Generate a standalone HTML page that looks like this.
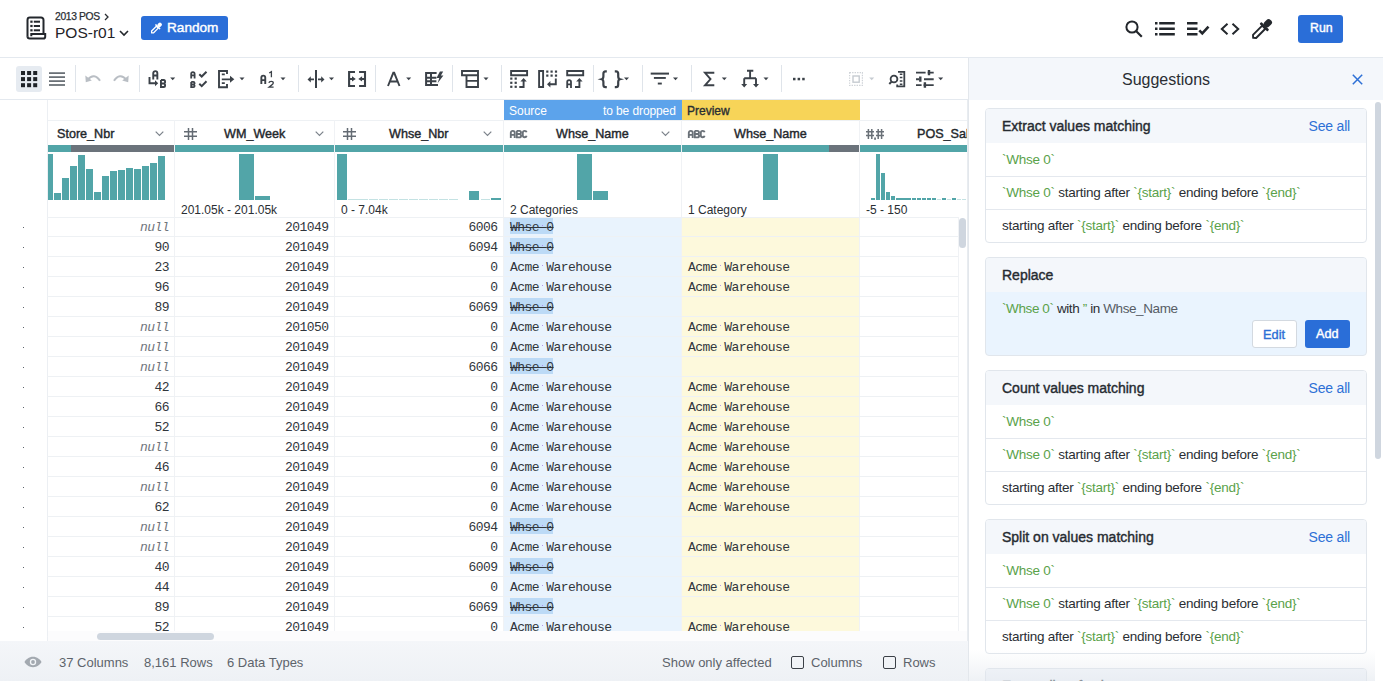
<!DOCTYPE html>
<html><head><meta charset="utf-8">
<style>
*{box-sizing:border-box;margin:0;padding:0}
html,body{width:1383px;height:681px;overflow:hidden;background:#fff;font-family:"Liberation Sans",sans-serif;color:#1f2328}
.abs{position:absolute;white-space:nowrap}
.ic{position:absolute;overflow:visible}
.sep{position:absolute;width:1px;background:#dce2e9}
.mono{font-family:"Liberation Mono",monospace}
.med{-webkit-text-stroke-width:0.4px;font-weight:normal}
.cell{position:absolute;height:20px;font-family:"Liberation Mono",monospace;font-size:13px;letter-spacing:-0.55px;line-height:20px;color:#30353b;white-space:nowrap}
.r{text-align:right}
.nul{color:#6f757c;font-style:italic}
.hl{background:#bcdaf6;text-decoration:line-through;padding:0 1px;margin-left:-1px}
.dot{position:relative}
.dot:after{content:"";position:absolute;left:2.6px;top:4.8px;width:1.7px;height:1.7px;border-radius:50%;background:#a77ae6}
.sug{position:absolute;left:17px;width:382px;border:1px solid #e1e6ec;border-radius:4px;background:#fff;overflow:hidden}
.sh{height:34px;background:#f4f7fb;position:relative;font-size:14px;color:#262b31}
.sh span{-webkit-text-stroke-width:0.4px}
.sh span{position:absolute;left:16px;top:8.5px}
.si.f{border-top:none}
.si.f span.t{top:8.6px}
.sh b{position:absolute;right:16px;top:8.5px;font-weight:normal;color:#2d70d6;font-size:14px;letter-spacing:-0.2px}
.si{height:33px;border-top:1px solid #e4e8ee;position:relative;font-size:13.5px;color:#2a2e33;letter-spacing:-0.25px}
.si span.t{position:absolute;left:16px;top:7.8px;white-space:nowrap}
.g{color:#5aa24a}
</style></head><body>

<div class="abs" style="left:0;top:0;width:1383px;height:58px;border-bottom:1px solid #e4e9ef;background:#fff"></div>
<svg class="ic" style="left:0;top:0" width="60" height="50" viewBox="0 0 60 50"><g fill="none" stroke="#23272c" stroke-width="2"><path d="M27.5 36.5V20a2.4 2.4 0 0 1 2.4-2.4h11.2a2.4 2.4 0 0 1 2.4 2.4v13.6"/><path d="M27.5 36.3a2.3 2.3 0 0 0 2.3 2.3h13.6a1.8 1.8 0 0 0 1.8-1.8v-2.7H31.3v2.2"/></g><g fill="#23272c"><rect x="30.3" y="20.6" width="2.3" height="2.2"/><rect x="33.8" y="20.7" width="6.2" height="2"/><rect x="30.3" y="24.9" width="2.3" height="2.2"/><rect x="33.8" y="25" width="6.2" height="2"/><rect x="30.3" y="29.2" width="2.3" height="2.2"/><rect x="33.8" y="29.3" width="6.2" height="2"/></g></svg>
<div class="abs" style="left:55px;top:11px;font-size:10.3px;color:#2a2e33;letter-spacing:-0.35px;-webkit-text-stroke-width:0.25px">2013 POS</div>
<svg class="ic" style="left:104px;top:13px" width="5" height="8" viewBox="0 0 5 8" ><path d="M1 1l3 3-3 3" fill="none" stroke="#2a2e33" stroke-width="1.3"/></svg>
<div class="abs" style="left:55px;top:24px;font-size:15.5px;color:#1f2328;letter-spacing:0px">POS-r01</div>
<svg class="ic" style="left:119px;top:30px" width="10" height="6" viewBox="0 0 10 6" ><path d="M1 1l4 4 4-4" fill="none" stroke="#23272c" stroke-width="1.6"/></svg>
<div class="abs" style="left:141px;top:16px;width:87px;height:24px;background:#2a6ed8;border-radius:3px"></div>
<svg class="ic" style="left:140px;top:16px" width="30" height="24" viewBox="140 16 30 24"><g transform="rotate(-45 156.6 27.9)"><path d="M149.6 27.9l1.2-1.3H157.6V29.2H150.8z" fill="none" stroke="#fff" stroke-width="1.3" stroke-linejoin="round"/><rect x="157.4" y="24.6" width="1.6" height="6.6" rx="0.5" fill="#fff"/><rect x="158.6" y="26" width="4.6" height="3.8" rx="1.6" fill="#fff"/></g></svg>
<div class="abs" style="left:167px;top:20px;font-size:13.6px;color:#fff;-webkit-text-stroke-width:0.4px">Random</div>
<svg class="ic" style="left:1125px;top:20px" width="18" height="18" viewBox="0 0 18 18" ><circle cx="7" cy="7" r="5.6" fill="none" stroke="#23272c" stroke-width="2"/><path d="M11 11l5.8 5.8" stroke="#23272c" stroke-width="2.2"/></svg>
<svg class="ic" style="left:1154px;top:22px" width="22" height="14" viewBox="0 0 22 14" ><g fill="#23272c"><rect x="1" y="0" width="2.5" height="2.5"/><rect x="1" y="5.5" width="2.5" height="2.5"/><rect x="1" y="11" width="2.5" height="2.5"/><rect x="5.2" y="0" width="15.6" height="2.5"/><rect x="5.2" y="5.5" width="15.6" height="2.5"/><rect x="5.2" y="11" width="15.6" height="2.5"/></g></svg>
<svg class="ic" style="left:1187px;top:22px" width="23" height="14" viewBox="0 0 23 14" ><g fill="#23272c"><rect x="0" y="0" width="10.5" height="2.5"/><rect x="0" y="5.5" width="10.5" height="2.5"/><rect x="0" y="11" width="10.5" height="2.5"/></g><path d="M12.3 8.3l3 3 6.2-6.6" fill="none" stroke="#23272c" stroke-width="2.6"/></svg>
<svg class="ic" style="left:1220px;top:23px" width="20" height="12" viewBox="0 0 20 12" ><path d="M7.5 0.8L1.8 6l5.7 5.2M12.5 0.8L18.2 6l-5.7 5.2" fill="none" stroke="#23272c" stroke-width="2"/></svg>
<svg class="ic" style="left:1240px;top:8px" width="44" height="44" viewBox="1240 8 44 44"><g transform="rotate(-45 1262 29)"><path d="M1249.5 29l2-2.2H1264.5V31.2H1251.5z" fill="none" stroke="#23272c" stroke-width="1.9" stroke-linejoin="round"/><rect x="1264" y="23.5" width="2.6" height="11" rx="0.8" fill="#23272c"/><rect x="1266" y="25.8" width="8.5" height="6.4" rx="2.8" fill="#23272c"/></g></svg>
<div class="abs" style="left:1298px;top:15px;width:45px;height:28px;background:#2a6ed8;border-radius:3px"></div>
<div class="abs" style="left:1310px;top:21px;font-size:12.3px;color:#fff;-webkit-text-stroke-width:0.4px">Run</div>
<div class="abs" style="left:0;top:58px;width:968px;height:42px;border-bottom:1px solid #e4e9ef;background:#fff"></div>
<div class="abs" style="left:16px;top:66px;width:26px;height:26px;background:#e6ebf1;border-radius:3px"></div>
<svg class="ic" style="left:0;top:58px" width="968" height="42" viewBox="0 58 968 42"><rect x="21.0" y="71.0" width="4" height="4" fill="#1f2328"/><rect x="27.1" y="71.0" width="4" height="4" fill="#1f2328"/><rect x="33.2" y="71.0" width="4" height="4" fill="#1f2328"/><rect x="21.0" y="77.1" width="4" height="4" fill="#1f2328"/><rect x="27.1" y="77.1" width="4" height="4" fill="#1f2328"/><rect x="33.2" y="77.1" width="4" height="4" fill="#1f2328"/><rect x="21.0" y="83.2" width="4" height="4" fill="#1f2328"/><rect x="27.1" y="83.2" width="4" height="4" fill="#1f2328"/><rect x="33.2" y="83.2" width="4" height="4" fill="#1f2328"/><rect x="49" y="72.3" width="16" height="1.6" fill="#5a6168"/><rect x="49" y="76.3" width="16" height="1.6" fill="#5a6168"/><rect x="49" y="80.3" width="16" height="1.6" fill="#5a6168"/><rect x="49" y="84.2" width="16" height="1.6" fill="#5a6168"/><rect x="75" y="65" width="1" height="27" fill="#dfe4ea"/><rect x="139" y="65" width="1" height="27" fill="#dfe4ea"/><rect x="298" y="65" width="1" height="27" fill="#dfe4ea"/><rect x="375" y="65" width="1" height="27" fill="#dfe4ea"/><rect x="452" y="65" width="1" height="27" fill="#dfe4ea"/><rect x="501" y="65" width="1" height="27" fill="#dfe4ea"/><rect x="593" y="65" width="1" height="27" fill="#dfe4ea"/><rect x="642" y="65" width="1" height="27" fill="#dfe4ea"/><rect x="691" y="65" width="1" height="27" fill="#dfe4ea"/><rect x="781" y="65" width="1" height="27" fill="#dfe4ea"/><path d="M88 79.5C91.5 74.8 96.5 75 100 80.8" fill="none" stroke="#b9bec4" stroke-width="2"/><path d="M85.3 75.5L85.8 82.2 91.8 80.6z" fill="#b9bec4"/><path d="M126 79.5C122.5 74.8 117.5 75 114 80.8" fill="none" stroke="#b9bec4" stroke-width="2"/><path d="M128.7 75.5L128.2 82.2 122.2 80.6z" fill="#b9bec4"/><path d="M153.25 79.4V73.2a2.05 2.05 0 0 1 4.1 0V79.4M153.25 75.536H157.35000000000002" fill="none" stroke="#3b4148" stroke-width="1.9"/><path d="M149.5 77v6.2h6" fill="none" stroke="#3b4148" stroke-width="1.9"/><path d="M155 80.2l3.2 3-3.2 3z" fill="#3b4148"/><path d="M160.95 79.95H163.8Q165.05 79.95 165.05 81.75V82.5Q165.05 83.5 163.5 83.5H160.95M163.5 83.5Q165.05 83.5 165.05 84.7V86Q165.05 87.05 163.8 87.05H160.95V79.95" fill="none" stroke="#3b4148" stroke-width="1.9"/><path d="M170.2 77.4h5l-2.5 2.9z" fill="#3b4148"/><path d="M191.20000000000002 78.4V73.80000000000001a1.7000000000000002 1.7000000000000002 0 0 1 3.4000000000000004 0V78.4M191.20000000000002 75.376H194.6" fill="none" stroke="#3b4148" stroke-width="1.8"/><path d="M191.20000000000002 81.9H193.3Q194.6 81.9 194.6 83.25V83.5Q194.6 84.5 193.0 84.5H191.20000000000002M193.0 84.5Q194.6 84.5 194.6 85.7V86Q194.6 87.1 193.3 87.1H191.20000000000002V81.9" fill="none" stroke="#3b4148" stroke-width="1.8"/><path d="M199.3 74.2l2.4 2.3 4.8-4.8M199.3 83.8l2.4 2.3 4.8-4.8" fill="none" stroke="#3b4148" stroke-width="2"/><path d="M227 74V71H219V87.2H227V84" fill="none" stroke="#3b4148" stroke-width="1.9"/><path d="M221.8 74.4h3M221.8 83.2h3M221.8 79.3h9" fill="none" stroke="#3b4148" stroke-width="1.8"/><path d="M230 75.8l4.3 3.5-4.3 3.5z" fill="#3b4148"/><path d="M239.5 77.4h5l-2.5 2.9z" fill="#3b4148"/><path d="M261.34999999999997 84.0V77.60000000000001a1.95 1.95 0 0 1 3.9 0V84.0M261.34999999999997 80.09400000000001H265.25" fill="none" stroke="#3b4148" stroke-width="1.9"/><path d="M269.2 73l2.2-1.3V77.2" fill="none" stroke="#3b4148" stroke-width="1.3"/><path d="M268.9 82.8c.3-1.8 4.4-2 4.4.2 0 1.5-2.2 2.3-4.4 4.2h4.7" fill="none" stroke="#3b4148" stroke-width="1.3"/><path d="M280.5 77.4h5l-2.5 2.9z" fill="#3b4148"/><rect x="315" y="70" width="2" height="18" fill="#3b4148"/><path d="M309.5 79.4h4.5M318 79.4h4.5" stroke="#3b4148" stroke-width="1.9"/><path d="M307.5 79.4l3.3-3.2v6.4zM324.5 79.4l-3.3-3.2v6.4z" fill="#3b4148"/><path d="M329 77.4h5l-2.5 2.9z" fill="#3b4148"/><path d="M355 72H349.1V86H355M359.1 72H365V86H359.1" fill="none" stroke="#3b4148" stroke-width="2.1"/><path d="M349.5 78.9h3M364.6 78.9h-3" stroke="#3b4148" stroke-width="2"/><path d="M355.8 78.9l-3.8-2.7v5.4zM358.3 78.9l3.8-2.7v5.4z" fill="#3b4148"/><path d="M388 86L393.3 72.8h.9L399.5 86M390.2 81.5h7" fill="none" stroke="#3b4148" stroke-width="1.9"/><path d="M406.2 77.4h5l-2.5 2.9z" fill="#3b4148"/><path d="M436.6 73H426.1V84.9H438M431 73V84.9M426.1 77.8H436.4M426.1 81.3H436.4" fill="none" stroke="#3b4148" stroke-width="2"/><path d="M439.9 71.4L436.5 78H439.3L437.6 83.2 443.4 75.5H440.9L443.2 71.4z" fill="#3b4148"/><path d="M462 71h16v4.3h-16z" fill="none" stroke="#3b4148" stroke-width="1.9"/><path d="M466.5 75.3V87h11.5V75.3M466.5 80.9h11.5" fill="none" stroke="#3b4148" stroke-width="1.9"/><path d="M483.5 77.4h5l-2.5 2.9z" fill="#3b4148"/><path d="M511.1 71h16v4.2h-16z" fill="none" stroke="#3b4148" stroke-width="1.9"/><rect x="510.2" y="77.5" width="2.2" height="2.2" fill="#3b4148"/><rect x="514.6" y="77.5" width="2.2" height="2.2" fill="#3b4148"/><rect x="510.2" y="81.7" width="2.2" height="2.2" fill="#3b4148"/><rect x="514.6" y="81.7" width="2.2" height="2.2" fill="#3b4148"/><rect x="510.2" y="85.7" width="2.2" height="2.2" fill="#3b4148"/><rect x="514.6" y="85.7" width="2.2" height="2.2" fill="#3b4148"/><path d="M519.3 87H523.6V80.5" fill="none" stroke="#3b4148" stroke-width="1.9"/><path d="M523.6 78l-3.2 3.4h6.4z" fill="#3b4148"/><path d="M539.1 71h4v16h-4z" fill="none" stroke="#3b4148" stroke-width="1.9"/><rect x="546.2" y="70.5" width="2.2" height="2.2" fill="#3b4148"/><rect x="546.2" y="74.5" width="2.2" height="2.2" fill="#3b4148"/><rect x="550.5" y="70.5" width="2.2" height="2.2" fill="#3b4148"/><rect x="550.5" y="74.5" width="2.2" height="2.2" fill="#3b4148"/><rect x="554.9" y="70.5" width="2.2" height="2.2" fill="#3b4148"/><rect x="554.9" y="74.5" width="2.2" height="2.2" fill="#3b4148"/><path d="M555.8 78.5V84.2H549.5" fill="none" stroke="#3b4148" stroke-width="1.9"/><path d="M547 84.2l3.4-3.2v6.4z" fill="#3b4148"/><path d="M567.2 71h16v4.2h-16z" fill="none" stroke="#3b4148" stroke-width="1.9"/><path d="M567.1999999999999 88.0V82.00000000000001a1.9 1.9 0 0 1 3.8 0V88.0M567.1999999999999 84.304H571.0" fill="none" stroke="#3b4148" stroke-width="1.8"/><path d="M575 87H579.4V80.5" fill="none" stroke="#3b4148" stroke-width="1.9"/><path d="M579.4 78l-3.2 3.4h6.4z" fill="#3b4148"/><path d="M606.8 71.3h-1.2c-1.7 0-2.2.8-2.2 2.4v2.6c0 1.6-.6 2.6-1.7 2.9 1.1.3 1.7 1.3 1.7 2.9v2.6c0 1.6.5 2.4 2.2 2.4h1.2M614.8 71.3h1.2c1.7 0 2.2.8 2.2 2.4v2.6c0 1.6.6 2.6 1.7 2.9-1.1.3-1.7 1.3-1.7 2.9v2.6c0 1.6-.5 2.4-2.2 2.4h-1.2" fill="none" stroke="#3b4148" stroke-width="2.2"/><path d="M624 77.4h5l-2.5 2.9z" fill="#3b4148"/><rect x="650.7" y="72.6" width="18.3" height="2" fill="#3b4148"/><rect x="653.9" y="77" width="11.9" height="1.9" fill="#3b4148"/><rect x="657.8" y="82.6" width="4" height="1.9" fill="#3b4148"/><path d="M673 77.4h5l-2.5 2.9z" fill="#3b4148"/><path d="M714.3 72.8H705L710.5 79 705 85.3H714.3" fill="none" stroke="#3b4148" stroke-width="1.9"/><path d="M721.8 77.4h5l-2.5 2.9z" fill="#3b4148"/><path d="M747 70.8h6.3M750.1 70.8V78.3M744.2 78.3H756M744.2 78.3V84.5M756 78.3V84.5" fill="none" stroke="#3b4148" stroke-width="1.9"/><path d="M741.2 84l3 3.5 3-3.5zM753 84l3 3.5 3-3.5z" fill="#3b4148"/><path d="M763.5 77.4h5l-2.5 2.9z" fill="#3b4148"/><rect x="793" y="77.8" width="2.5" height="2.5" fill="#3b4148"/><rect x="797.6" y="77.8" width="2.5" height="2.5" fill="#3b4148"/><rect x="802.2" y="77.8" width="2.5" height="2.5" fill="#3b4148"/><rect x="849.6" y="72.6" width="12.8" height="12.8" fill="none" stroke="#cfd3d8" stroke-width="1.2" stroke-dasharray="1.4 1.1"/><rect x="853" y="76" width="6.2" height="6.2" fill="none" stroke="#c6cbd1" stroke-width="1.4"/><path d="M869.2 77.4h5l-2.5 2.9z" fill="#c6cbd1"/><path d="M898 71.8H904.3V86.3H897.2V84.5" fill="none" stroke="#3b4148" stroke-width="1.8"/><path d="M899.8 74.2h2.6M899.8 77.6h2.6M899.8 81h2.6M899.8 84.3h2.6" stroke="#3b4148" stroke-width="1.5"/><circle cx="894" cy="79" r="3.4" fill="none" stroke="#3b4148" stroke-width="1.8"/><path d="M891.6 81.6L889.3 84" stroke="#3b4148" stroke-width="2"/><path d="M916 72.6h9.6M927.7 72.6h6M916 79.2h3M924 79.2h9.7M916 85.1h5.6M923.6 85.1h10.1" stroke="#3b4148" stroke-width="1.9"/><path d="M929 70v5.2M920.3 76.6v5.2M924.9 82.2v5.5" stroke="#3b4148" stroke-width="2.4"/><path d="M938.2 77.4h5l-2.5 2.9z" fill="#3b4148"/></svg><div class="abs" style="left:0;top:100px;width:968px;height:541px;background:#fff"></div>
<div class="abs" style="left:504px;top:217px;width:177px;height:414px;background:#e9f3fd"></div>
<div class="abs" style="left:682px;top:217px;width:177px;height:414px;background:#fdf9dc"></div>
<div class="abs" style="left:504px;top:100px;width:178px;height:20px;background:#5ca3eb"></div>
<div class="abs" style="left:682px;top:100px;width:178px;height:20px;background:#f7d458"></div>
<div class="abs" style="left:509px;top:104px;font-size:12px;color:#fff">Source</div>
<div class="abs" style="left:603px;top:104px;font-size:12px;color:#fff;letter-spacing:-0.1px">to be dropped</div>
<div class="abs" style="left:687px;top:104px;font-size:12px;color:#2a2e33;-webkit-text-stroke-width:0.35px">Preview</div>
<div class="abs" style="left:47px;top:120px;width:921px;height:1px;background:#eef1f4"></div>
<div class="abs" style="left:47px;top:100px;width:1px;height:541px;background:#eceff3"></div>
<div class="abs" style="left:174px;top:120px;width:1px;height:511px;background:#f0f2f5"></div>
<div class="abs" style="left:334px;top:120px;width:1px;height:511px;background:#f0f2f5"></div>
<div class="abs" style="left:503px;top:120px;width:1px;height:511px;background:#f0f2f5"></div>
<div class="abs" style="left:681px;top:120px;width:1px;height:511px;background:#f0f2f5"></div>
<div class="abs" style="left:859px;top:120px;width:1px;height:511px;background:#f0f2f5"></div>
<div class="abs" style="left:48px;top:145px;width:126px;height:7px;background:#52a5a8"></div>
<div class="abs" style="left:71px;top:145px;width:103px;height:7px;background:#6b737b"></div>
<div class="abs" style="left:175px;top:145px;width:159px;height:7px;background:#52a5a8"></div>
<div class="abs" style="left:335px;top:145px;width:168px;height:7px;background:#52a5a8"></div>
<div class="abs" style="left:504px;top:145px;width:177px;height:7px;background:#52a5a8"></div>
<div class="abs" style="left:682px;top:145px;width:147px;height:7px;background:#52a5a8"></div>
<div class="abs" style="left:829px;top:145px;width:30px;height:7px;background:#6b737b"></div>
<div class="abs" style="left:860px;top:145px;width:107px;height:7px;background:#52a5a8"></div>
<div class="abs" style="left:48px;top:154px;width:5px;height:46px;background:#52a5a8"></div>
<div class="abs" style="left:54px;top:193px;width:7px;height:7px;background:#52a5a8"></div>
<div class="abs" style="left:62px;top:178px;width:7px;height:22px;background:#52a5a8"></div>
<div class="abs" style="left:70px;top:166px;width:7px;height:34px;background:#52a5a8"></div>
<div class="abs" style="left:78px;top:155px;width:7px;height:45px;background:#52a5a8"></div>
<div class="abs" style="left:86px;top:169px;width:7px;height:31px;background:#52a5a8"></div>
<div class="abs" style="left:94px;top:192px;width:7px;height:8px;background:#52a5a8"></div>
<div class="abs" style="left:102px;top:176px;width:7px;height:24px;background:#52a5a8"></div>
<div class="abs" style="left:110px;top:171px;width:7px;height:29px;background:#52a5a8"></div>
<div class="abs" style="left:118px;top:170px;width:7px;height:30px;background:#52a5a8"></div>
<div class="abs" style="left:126px;top:168px;width:7px;height:32px;background:#52a5a8"></div>
<div class="abs" style="left:134px;top:169px;width:7px;height:31px;background:#52a5a8"></div>
<div class="abs" style="left:142px;top:166px;width:7px;height:34px;background:#52a5a8"></div>
<div class="abs" style="left:150px;top:163px;width:7px;height:37px;background:#52a5a8"></div>
<div class="abs" style="left:158px;top:156px;width:7px;height:44px;background:#52a5a8"></div>
<div class="abs" style="left:239px;top:154px;width:15px;height:46px;background:#52a5a8"></div>
<div class="abs" style="left:255px;top:196px;width:15px;height:4px;background:#52a5a8"></div>
<div class="abs" style="left:337px;top:154px;width:10px;height:46px;background:#52a5a8"></div>
<div class="abs" style="left:469px;top:191px;width:10px;height:9px;background:#52a5a8"></div>
<div class="abs" style="left:491px;top:198px;width:10px;height:2px;background:#52a5a8"></div>
<div class="abs" style="left:348.4px;top:199px;width:9.2px;height:1px;background:#c4e2e3"></div>
<div class="abs" style="left:358.4px;top:199px;width:9.2px;height:1px;background:#c4e2e3"></div>
<div class="abs" style="left:368.5px;top:199px;width:9.2px;height:1px;background:#c4e2e3"></div>
<div class="abs" style="left:378.5px;top:199px;width:9.2px;height:1px;background:#c4e2e3"></div>
<div class="abs" style="left:388.6px;top:199px;width:9.2px;height:1px;background:#c4e2e3"></div>
<div class="abs" style="left:398.6px;top:199px;width:9.2px;height:1px;background:#c4e2e3"></div>
<div class="abs" style="left:408.7px;top:199px;width:9.2px;height:1px;background:#c4e2e3"></div>
<div class="abs" style="left:418.8px;top:199px;width:9.2px;height:1px;background:#c4e2e3"></div>
<div class="abs" style="left:428.8px;top:199px;width:9.2px;height:1px;background:#c4e2e3"></div>
<div class="abs" style="left:438.8px;top:199px;width:9.2px;height:1px;background:#c4e2e3"></div>
<div class="abs" style="left:448.9px;top:199px;width:9.2px;height:1px;background:#c4e2e3"></div>
<div class="abs" style="left:480.5px;top:199px;width:9.2px;height:1px;background:#c4e2e3"></div>
<div class="abs" style="left:577px;top:154px;width:15px;height:46px;background:#52a5a8"></div>
<div class="abs" style="left:593px;top:191px;width:15px;height:9px;background:#52a5a8"></div>
<div class="abs" style="left:763px;top:154px;width:15px;height:46px;background:#52a5a8"></div>
<div class="abs" style="left:871.00px;top:198px;width:4.2px;height:2px;background:#52a5a8"></div>
<div class="abs" style="left:876.07px;top:154px;width:4.2px;height:46px;background:#52a5a8"></div>
<div class="abs" style="left:881.14px;top:173px;width:4.2px;height:27px;background:#52a5a8"></div>
<div class="abs" style="left:886.21px;top:192px;width:4.2px;height:8px;background:#52a5a8"></div>
<div class="abs" style="left:891.28px;top:196px;width:4.2px;height:4px;background:#52a5a8"></div>
<div class="abs" style="left:896.35px;top:198px;width:4.2px;height:2px;background:#52a5a8"></div>
<div class="abs" style="left:901.42px;top:198px;width:4.2px;height:2px;background:#52a5a8"></div>
<div class="abs" style="left:906.49px;top:198px;width:4.2px;height:2px;background:#52a5a8"></div>
<div class="abs" style="left:911.56px;top:198px;width:4.2px;height:2px;background:#52a5a8"></div>
<div class="abs" style="left:916.63px;top:198px;width:4.2px;height:2px;background:#52a5a8"></div>
<div class="abs" style="left:921.70px;top:198px;width:4.2px;height:2px;background:#52a5a8"></div>
<div class="abs" style="left:926.77px;top:198px;width:4.2px;height:2px;background:#52a5a8"></div>
<div class="abs" style="left:931.84px;top:198px;width:4.2px;height:2px;background:#52a5a8"></div>
<div class="abs" style="left:936.91px;top:199px;width:4.2px;height:1px;background:#c4e2e3"></div>
<div class="abs" style="left:941.98px;top:198px;width:4.2px;height:2px;background:#52a5a8"></div>
<div class="abs" style="left:947.05px;top:199px;width:4.2px;height:1px;background:#c4e2e3"></div>
<div class="abs" style="left:952.12px;top:198px;width:4.2px;height:2px;background:#52a5a8"></div>
<div class="abs" style="left:957.19px;top:199px;width:4.2px;height:1px;background:#c4e2e3"></div>
<div class="abs" style="left:962.26px;top:199px;width:4.2px;height:1px;background:#c4e2e3"></div>
<div class="abs" style="left:57px;top:127px;font-size:12.6px;color:#23272c;-webkit-text-stroke-width:0.4px">Store_Nbr</div>
<svg class="ic" style="left:155px;top:131px" width="9" height="6" viewBox="0 0 9 6" ><path d="M0.7 0.7l3.8 3.8 3.8-3.8" fill="none" stroke="#7b828a" stroke-width="1.2"/></svg>
<svg class="ic" style="left:184px;top:128px" width="13" height="12" viewBox="0 0 13 12" ><g stroke="#646b73" stroke-width="1.5" fill="none"><path d="M4.5 0v12M8.5 0v12M0 3.8h13M0 8.2h13"/></g></svg>
<div class="abs" style="left:224px;top:127px;font-size:12.6px;color:#23272c;-webkit-text-stroke-width:0.4px">WM_Week</div>
<svg class="ic" style="left:315px;top:131px" width="9" height="6" viewBox="0 0 9 6" ><path d="M0.7 0.7l3.8 3.8 3.8-3.8" fill="none" stroke="#7b828a" stroke-width="1.2"/></svg>
<svg class="ic" style="left:343px;top:128px" width="13" height="12" viewBox="0 0 13 12" ><g stroke="#646b73" stroke-width="1.5" fill="none"><path d="M4.5 0v12M8.5 0v12M0 3.8h13M0 8.2h13"/></g></svg>
<div class="abs" style="left:389px;top:127px;font-size:12.6px;color:#23272c;-webkit-text-stroke-width:0.4px">Whse_Nbr</div>
<svg class="ic" style="left:483px;top:131px" width="9" height="6" viewBox="0 0 9 6" ><path d="M0.7 0.7l3.8 3.8 3.8-3.8" fill="none" stroke="#7b828a" stroke-width="1.2"/></svg>
<svg class="ic" style="left:510px;top:130px" width="18" height="9" viewBox="0 0 18 9"><g fill="none" stroke="#6a7178" stroke-width="1.85"><path d="M0.8 8V2.8a1.95 1.95 0 0 1 3.9 0V8M0.8 4.8h3.9" /><path d="M6.8 0.8h2.6a1.6 1.6 0 0 1 0 3.2H6.8M9.4 4a1.7 1.7 0 0 1 0 3.4H6.8V0.8" /><path d="M16.6 2.3c-.2-1-1-1.5-1.9-1.5-1.2 0-1.9.7-1.9 2V5.2c0 1.3.7 2 1.9 2 .9 0 1.7-.5 1.9-1.5"/></g></svg>
<div class="abs" style="left:556px;top:127px;font-size:12.6px;color:#23272c;-webkit-text-stroke-width:0.4px">Whse_Name</div>
<svg class="ic" style="left:661px;top:131px" width="9" height="6" viewBox="0 0 9 6" ><path d="M0.7 0.7l3.8 3.8 3.8-3.8" fill="none" stroke="#7b828a" stroke-width="1.2"/></svg>
<svg class="ic" style="left:688px;top:130px" width="18" height="9" viewBox="0 0 18 9"><g fill="none" stroke="#6a7178" stroke-width="1.85"><path d="M0.8 8V2.8a1.95 1.95 0 0 1 3.9 0V8M0.8 4.8h3.9" /><path d="M6.8 0.8h2.6a1.6 1.6 0 0 1 0 3.2H6.8M9.4 4a1.7 1.7 0 0 1 0 3.4H6.8V0.8" /><path d="M16.6 2.3c-.2-1-1-1.5-1.9-1.5-1.2 0-1.9.7-1.9 2V5.2c0 1.3.7 2 1.9 2 .9 0 1.7-.5 1.9-1.5"/></g></svg>
<div class="abs" style="left:734px;top:127px;font-size:12.6px;color:#23272c;-webkit-text-stroke-width:0.4px">Whse_Name</div>
<svg class="ic" style="left:866px;top:129px" width="18" height="11" viewBox="0 0 18 11" ><g stroke="#6a7178" stroke-width="1.5" fill="none"><path d="M2.4 0v10M5.8 0v10M0 2.8h8M0 6.5h8M12.2 0v10M15.6 0v10M10 2.8h8M10 6.5h8"/></g><rect x="8.2" y="8.5" width="1.7" height="2.3" fill="#6a7178"/></svg>
<div class="abs" style="left:917px;top:127px;width:50px;overflow:hidden;font-size:12.6px;color:#23272c;-webkit-text-stroke-width:0.4px">POS_Sales</div>
<div class="abs" style="left:181px;top:203px;font-size:12px;color:#2a2e33">201.05k - 201.05k</div>
<div class="abs" style="left:341px;top:203px;font-size:12px;color:#2a2e33">0 - 7.04k</div>
<div class="abs" style="left:510px;top:203px;font-size:12px;color:#2a2e33">2 Categories</div>
<div class="abs" style="left:688px;top:203px;font-size:12px;color:#2a2e33">1 Category</div>
<div class="abs" style="left:866px;top:203px;font-size:12px;color:#2a2e33">-5 - 150</div>
<div class="abs" style="left:47px;top:217px;width:911px;height:1px;background:#eef1f4"></div>
<div class="abs" style="left:47px;top:236px;width:911px;height:1px;background:#eef1f4"></div>
<div class="abs" style="left:22.5px;top:226.5px;width:1.5px;height:1.5px;background:#5f656c"></div>
<div class="cell r nul" style="left:48px;top:218px;width:121px">null</div>
<div class="cell r" style="left:175px;top:218px;width:153.5px">201049</div>
<div class="cell r" style="left:335px;top:218px;width:162.5px">6006</div>
<div class="abs" style="left:510px;top:218px;width:43px;height:16px;background:#bcdaf6"></div>
<div class="cell" style="left:510px;top:218px"><span style="text-decoration:line-through">Whse<span class="dot">&nbsp;</span>0</span></div>
<div class="abs" style="left:47px;top:256px;width:911px;height:1px;background:#eef1f4"></div>
<div class="abs" style="left:22.5px;top:246.5px;width:1.5px;height:1.5px;background:#5f656c"></div>
<div class="cell r" style="left:48px;top:238px;width:121px">90</div>
<div class="cell r" style="left:175px;top:238px;width:153.5px">201049</div>
<div class="cell r" style="left:335px;top:238px;width:162.5px">6094</div>
<div class="abs" style="left:510px;top:238px;width:43px;height:16px;background:#bcdaf6"></div>
<div class="cell" style="left:510px;top:238px"><span style="text-decoration:line-through">Whse<span class="dot">&nbsp;</span>0</span></div>
<div class="abs" style="left:47px;top:276px;width:911px;height:1px;background:#eef1f4"></div>
<div class="abs" style="left:22.5px;top:266.5px;width:1.5px;height:1.5px;background:#5f656c"></div>
<div class="cell r" style="left:48px;top:258px;width:121px">23</div>
<div class="cell r" style="left:175px;top:258px;width:153.5px">201049</div>
<div class="cell r" style="left:335px;top:258px;width:162.5px">0</div>
<div class="cell" style="left:510px;top:258px">Acme<span class="dot">&nbsp;</span>Warehouse</div>
<div class="cell" style="left:688px;top:258px">Acme<span class="dot">&nbsp;</span>Warehouse</div>
<div class="abs" style="left:47px;top:296px;width:911px;height:1px;background:#eef1f4"></div>
<div class="abs" style="left:22.5px;top:286.5px;width:1.5px;height:1.5px;background:#5f656c"></div>
<div class="cell r" style="left:48px;top:278px;width:121px">96</div>
<div class="cell r" style="left:175px;top:278px;width:153.5px">201049</div>
<div class="cell r" style="left:335px;top:278px;width:162.5px">0</div>
<div class="cell" style="left:510px;top:278px">Acme<span class="dot">&nbsp;</span>Warehouse</div>
<div class="cell" style="left:688px;top:278px">Acme<span class="dot">&nbsp;</span>Warehouse</div>
<div class="abs" style="left:47px;top:316px;width:911px;height:1px;background:#eef1f4"></div>
<div class="abs" style="left:22.5px;top:306.5px;width:1.5px;height:1.5px;background:#5f656c"></div>
<div class="cell r" style="left:48px;top:298px;width:121px">89</div>
<div class="cell r" style="left:175px;top:298px;width:153.5px">201049</div>
<div class="cell r" style="left:335px;top:298px;width:162.5px">6069</div>
<div class="abs" style="left:510px;top:298px;width:43px;height:16px;background:#bcdaf6"></div>
<div class="cell" style="left:510px;top:298px"><span style="text-decoration:line-through">Whse<span class="dot">&nbsp;</span>0</span></div>
<div class="abs" style="left:47px;top:336px;width:911px;height:1px;background:#eef1f4"></div>
<div class="abs" style="left:22.5px;top:326.5px;width:1.5px;height:1.5px;background:#5f656c"></div>
<div class="cell r nul" style="left:48px;top:318px;width:121px">null</div>
<div class="cell r" style="left:175px;top:318px;width:153.5px">201050</div>
<div class="cell r" style="left:335px;top:318px;width:162.5px">0</div>
<div class="cell" style="left:510px;top:318px">Acme<span class="dot">&nbsp;</span>Warehouse</div>
<div class="cell" style="left:688px;top:318px">Acme<span class="dot">&nbsp;</span>Warehouse</div>
<div class="abs" style="left:47px;top:356px;width:911px;height:1px;background:#eef1f4"></div>
<div class="abs" style="left:22.5px;top:346.5px;width:1.5px;height:1.5px;background:#5f656c"></div>
<div class="cell r nul" style="left:48px;top:338px;width:121px">null</div>
<div class="cell r" style="left:175px;top:338px;width:153.5px">201049</div>
<div class="cell r" style="left:335px;top:338px;width:162.5px">0</div>
<div class="cell" style="left:510px;top:338px">Acme<span class="dot">&nbsp;</span>Warehouse</div>
<div class="cell" style="left:688px;top:338px">Acme<span class="dot">&nbsp;</span>Warehouse</div>
<div class="abs" style="left:47px;top:376px;width:911px;height:1px;background:#eef1f4"></div>
<div class="abs" style="left:22.5px;top:366.5px;width:1.5px;height:1.5px;background:#5f656c"></div>
<div class="cell r nul" style="left:48px;top:358px;width:121px">null</div>
<div class="cell r" style="left:175px;top:358px;width:153.5px">201049</div>
<div class="cell r" style="left:335px;top:358px;width:162.5px">6066</div>
<div class="abs" style="left:510px;top:358px;width:43px;height:16px;background:#bcdaf6"></div>
<div class="cell" style="left:510px;top:358px"><span style="text-decoration:line-through">Whse<span class="dot">&nbsp;</span>0</span></div>
<div class="abs" style="left:47px;top:396px;width:911px;height:1px;background:#eef1f4"></div>
<div class="abs" style="left:22.5px;top:386.5px;width:1.5px;height:1.5px;background:#5f656c"></div>
<div class="cell r" style="left:48px;top:378px;width:121px">42</div>
<div class="cell r" style="left:175px;top:378px;width:153.5px">201049</div>
<div class="cell r" style="left:335px;top:378px;width:162.5px">0</div>
<div class="cell" style="left:510px;top:378px">Acme<span class="dot">&nbsp;</span>Warehouse</div>
<div class="cell" style="left:688px;top:378px">Acme<span class="dot">&nbsp;</span>Warehouse</div>
<div class="abs" style="left:47px;top:416px;width:911px;height:1px;background:#eef1f4"></div>
<div class="abs" style="left:22.5px;top:406.5px;width:1.5px;height:1.5px;background:#5f656c"></div>
<div class="cell r" style="left:48px;top:398px;width:121px">66</div>
<div class="cell r" style="left:175px;top:398px;width:153.5px">201049</div>
<div class="cell r" style="left:335px;top:398px;width:162.5px">0</div>
<div class="cell" style="left:510px;top:398px">Acme<span class="dot">&nbsp;</span>Warehouse</div>
<div class="cell" style="left:688px;top:398px">Acme<span class="dot">&nbsp;</span>Warehouse</div>
<div class="abs" style="left:47px;top:436px;width:911px;height:1px;background:#eef1f4"></div>
<div class="abs" style="left:22.5px;top:426.5px;width:1.5px;height:1.5px;background:#5f656c"></div>
<div class="cell r" style="left:48px;top:418px;width:121px">52</div>
<div class="cell r" style="left:175px;top:418px;width:153.5px">201049</div>
<div class="cell r" style="left:335px;top:418px;width:162.5px">0</div>
<div class="cell" style="left:510px;top:418px">Acme<span class="dot">&nbsp;</span>Warehouse</div>
<div class="cell" style="left:688px;top:418px">Acme<span class="dot">&nbsp;</span>Warehouse</div>
<div class="abs" style="left:47px;top:456px;width:911px;height:1px;background:#eef1f4"></div>
<div class="abs" style="left:22.5px;top:446.5px;width:1.5px;height:1.5px;background:#5f656c"></div>
<div class="cell r nul" style="left:48px;top:438px;width:121px">null</div>
<div class="cell r" style="left:175px;top:438px;width:153.5px">201049</div>
<div class="cell r" style="left:335px;top:438px;width:162.5px">0</div>
<div class="cell" style="left:510px;top:438px">Acme<span class="dot">&nbsp;</span>Warehouse</div>
<div class="cell" style="left:688px;top:438px">Acme<span class="dot">&nbsp;</span>Warehouse</div>
<div class="abs" style="left:47px;top:476px;width:911px;height:1px;background:#eef1f4"></div>
<div class="abs" style="left:22.5px;top:466.5px;width:1.5px;height:1.5px;background:#5f656c"></div>
<div class="cell r" style="left:48px;top:458px;width:121px">46</div>
<div class="cell r" style="left:175px;top:458px;width:153.5px">201049</div>
<div class="cell r" style="left:335px;top:458px;width:162.5px">0</div>
<div class="cell" style="left:510px;top:458px">Acme<span class="dot">&nbsp;</span>Warehouse</div>
<div class="cell" style="left:688px;top:458px">Acme<span class="dot">&nbsp;</span>Warehouse</div>
<div class="abs" style="left:47px;top:496px;width:911px;height:1px;background:#eef1f4"></div>
<div class="abs" style="left:22.5px;top:486.5px;width:1.5px;height:1.5px;background:#5f656c"></div>
<div class="cell r nul" style="left:48px;top:478px;width:121px">null</div>
<div class="cell r" style="left:175px;top:478px;width:153.5px">201049</div>
<div class="cell r" style="left:335px;top:478px;width:162.5px">0</div>
<div class="cell" style="left:510px;top:478px">Acme<span class="dot">&nbsp;</span>Warehouse</div>
<div class="cell" style="left:688px;top:478px">Acme<span class="dot">&nbsp;</span>Warehouse</div>
<div class="abs" style="left:47px;top:516px;width:911px;height:1px;background:#eef1f4"></div>
<div class="abs" style="left:22.5px;top:506.5px;width:1.5px;height:1.5px;background:#5f656c"></div>
<div class="cell r" style="left:48px;top:498px;width:121px">62</div>
<div class="cell r" style="left:175px;top:498px;width:153.5px">201049</div>
<div class="cell r" style="left:335px;top:498px;width:162.5px">0</div>
<div class="cell" style="left:510px;top:498px">Acme<span class="dot">&nbsp;</span>Warehouse</div>
<div class="cell" style="left:688px;top:498px">Acme<span class="dot">&nbsp;</span>Warehouse</div>
<div class="abs" style="left:47px;top:536px;width:911px;height:1px;background:#eef1f4"></div>
<div class="abs" style="left:22.5px;top:526.5px;width:1.5px;height:1.5px;background:#5f656c"></div>
<div class="cell r nul" style="left:48px;top:518px;width:121px">null</div>
<div class="cell r" style="left:175px;top:518px;width:153.5px">201049</div>
<div class="cell r" style="left:335px;top:518px;width:162.5px">6094</div>
<div class="abs" style="left:510px;top:518px;width:43px;height:16px;background:#bcdaf6"></div>
<div class="cell" style="left:510px;top:518px"><span style="text-decoration:line-through">Whse<span class="dot">&nbsp;</span>0</span></div>
<div class="abs" style="left:47px;top:556px;width:911px;height:1px;background:#eef1f4"></div>
<div class="abs" style="left:22.5px;top:546.5px;width:1.5px;height:1.5px;background:#5f656c"></div>
<div class="cell r nul" style="left:48px;top:538px;width:121px">null</div>
<div class="cell r" style="left:175px;top:538px;width:153.5px">201049</div>
<div class="cell r" style="left:335px;top:538px;width:162.5px">0</div>
<div class="cell" style="left:510px;top:538px">Acme<span class="dot">&nbsp;</span>Warehouse</div>
<div class="cell" style="left:688px;top:538px">Acme<span class="dot">&nbsp;</span>Warehouse</div>
<div class="abs" style="left:47px;top:576px;width:911px;height:1px;background:#eef1f4"></div>
<div class="abs" style="left:22.5px;top:566.5px;width:1.5px;height:1.5px;background:#5f656c"></div>
<div class="cell r" style="left:48px;top:558px;width:121px">40</div>
<div class="cell r" style="left:175px;top:558px;width:153.5px">201049</div>
<div class="cell r" style="left:335px;top:558px;width:162.5px">6009</div>
<div class="abs" style="left:510px;top:558px;width:43px;height:16px;background:#bcdaf6"></div>
<div class="cell" style="left:510px;top:558px"><span style="text-decoration:line-through">Whse<span class="dot">&nbsp;</span>0</span></div>
<div class="abs" style="left:47px;top:596px;width:911px;height:1px;background:#eef1f4"></div>
<div class="abs" style="left:22.5px;top:586.5px;width:1.5px;height:1.5px;background:#5f656c"></div>
<div class="cell r" style="left:48px;top:578px;width:121px">44</div>
<div class="cell r" style="left:175px;top:578px;width:153.5px">201049</div>
<div class="cell r" style="left:335px;top:578px;width:162.5px">0</div>
<div class="cell" style="left:510px;top:578px">Acme<span class="dot">&nbsp;</span>Warehouse</div>
<div class="cell" style="left:688px;top:578px">Acme<span class="dot">&nbsp;</span>Warehouse</div>
<div class="abs" style="left:47px;top:616px;width:911px;height:1px;background:#eef1f4"></div>
<div class="abs" style="left:22.5px;top:606.5px;width:1.5px;height:1.5px;background:#5f656c"></div>
<div class="cell r" style="left:48px;top:598px;width:121px">89</div>
<div class="cell r" style="left:175px;top:598px;width:153.5px">201049</div>
<div class="cell r" style="left:335px;top:598px;width:162.5px">6069</div>
<div class="abs" style="left:510px;top:598px;width:43px;height:16px;background:#bcdaf6"></div>
<div class="cell" style="left:510px;top:598px"><span style="text-decoration:line-through">Whse<span class="dot">&nbsp;</span>0</span></div>
<div class="abs" style="left:47px;top:636px;width:911px;height:1px;background:#eef1f4"></div>
<div class="abs" style="left:22.5px;top:626.5px;width:1.5px;height:1.5px;background:#5f656c"></div>
<div class="cell r" style="left:48px;top:618px;width:121px">52</div>
<div class="cell r" style="left:175px;top:618px;width:153.5px">201049</div>
<div class="cell r" style="left:335px;top:618px;width:162.5px">0</div>
<div class="cell" style="left:510px;top:618px">Acme<span class="dot">&nbsp;</span>Warehouse</div>
<div class="cell" style="left:688px;top:618px">Acme<span class="dot">&nbsp;</span>Warehouse</div>
<div class="abs" style="left:48px;top:631px;width:920px;height:10px;background:#fcfcfd"></div>
<div class="abs" style="left:97px;top:633px;width:117px;height:7px;background:#cfd6df;border-radius:4px"></div>
<div class="abs" style="left:958px;top:217px;width:10px;height:414px;background:#fff;border-left:1px solid #f0f2f5"></div>
<div class="abs" style="left:959px;top:218px;width:7px;height:30px;background:#cfd6df;border-radius:4px"></div>
<div class="abs" style="left:967px;top:100px;width:1px;height:541px;background:#e8ecf0"></div>
<div class="abs" style="left:0;top:641px;width:968px;height:40px;background:linear-gradient(#f4f6f9,#eef1f5)"></div>
<svg class="ic" style="left:24px;top:656px" width="18" height="12" viewBox="0 0 18 12" ><path d="M9 0.8C5 0.8 1.8 3.5 0.5 6 1.8 8.5 5 11.2 9 11.2s7.2-2.7 8.5-5.2C16.2 3.5 13 0.8 9 0.8z" fill="#a3a9b0"/><circle cx="9" cy="6" r="3.2" fill="#f3f5f8"/><circle cx="9" cy="6" r="1.9" fill="#a3a9b0"/></svg>
<div class="abs" style="left:59px;top:655px;font-size:13px;color:#5d636b">37 Columns</div>
<div class="abs" style="left:144px;top:655px;font-size:13px;color:#5d636b">8,161 Rows</div>
<div class="abs" style="left:227px;top:655px;font-size:13px;color:#5d636b">6 Data Types</div>
<div class="abs" style="left:662px;top:655px;font-size:13px;color:#5d636b">Show only affected</div>
<div class="abs" style="left:811px;top:655px;font-size:13px;color:#5d636b">Columns</div>
<div class="abs" style="left:903px;top:655px;font-size:13px;color:#5d636b">Rows</div>
<div class="abs" style="left:791px;top:656px;width:13px;height:13px;border:1.6px solid #3b4047;border-radius:2px"></div>
<div class="abs" style="left:883px;top:656px;width:13px;height:13px;border:1.6px solid #3b4047;border-radius:2px"></div><div class="abs" style="left:968px;top:58px;width:415px;height:623px;background:#fff;border-left:1px solid #e3e7ec"></div>
<div class="abs" style="left:969px;top:58px;width:414px;height:42px;background:#f4f7fb"></div>
<div class="abs" style="left:1122px;top:70.5px;font-size:16px;color:#2a2e33">Suggestions</div>
<svg class="ic" style="left:1352px;top:74px" width="11" height="11" viewBox="0 0 11 11" ><path d="M0.8 0.8l9.4 9.4M10.2 0.8L0.8 10.2" stroke="#2d70d6" stroke-width="1.5"/></svg>
<div class="sug" style="left:985px;top:108px;height:135px"><div class="sh"><span>Extract values matching</span><b>See all</b></div><div class="si f"><span class="t"><span class="g">`Whse 0`</span></span></div><div class="si"><span class="t"><span class="g">`Whse 0`</span> starting after <span class="g">`{start}`</span> ending before <span class="g">`{end}`</span></span></div><div class="si"><span class="t">starting after <span class="g">`{start}`</span> ending before <span class="g">`{end}`</span></span></div></div>
<div class="sug" style="left:985px;top:257px;height:99px;background:#eaf4fe"><div class="sh"><span>Replace</span></div><div style="position:absolute;left:16px;top:43px;font-size:13.5px;letter-spacing:-0.4px;color:#2a2e33"><span class="g">`Whse 0`</span> with <span class="g">&#8221;</span> in <span style="color:#575d65">Whse_Name</span></div></div>
<div class="abs" style="left:1252px;top:320px;width:45px;height:28px;background:#fff;border:1px solid #d3d9e0;border-radius:3px"></div>
<div class="abs" style="left:1263px;top:327px;font-size:12.8px;color:#2d70d6;-webkit-text-stroke-width:0.4px">Edit</div>
<div class="abs" style="left:1305px;top:320px;width:45px;height:28px;background:#2a6ed8;border-radius:3px"></div>
<div class="abs" style="left:1316px;top:327px;font-size:12.7px;color:#fff;-webkit-text-stroke-width:0.4px">Add</div>
<div class="sug" style="left:985px;top:370px;height:135px"><div class="sh"><span>Count values matching</span><b>See all</b></div><div class="si f"><span class="t"><span class="g">`Whse 0`</span></span></div><div class="si"><span class="t"><span class="g">`Whse 0`</span> starting after <span class="g">`{start}`</span> ending before <span class="g">`{end}`</span></span></div><div class="si"><span class="t">starting after <span class="g">`{start}`</span> ending before <span class="g">`{end}`</span></span></div></div>
<div class="sug" style="left:985px;top:519px;height:135px"><div class="sh"><span>Split on values matching</span><b>See all</b></div><div class="si f"><span class="t"><span class="g">`Whse 0`</span></span></div><div class="si"><span class="t"><span class="g">`Whse 0`</span> starting after <span class="g">`{start}`</span> ending before <span class="g">`{end}`</span></span></div><div class="si"><span class="t">starting after <span class="g">`{start}`</span> ending before <span class="g">`{end}`</span></span></div></div>
<div class="sug" style="left:985px;top:668px;height:60px"><div class="sh"><span>Extract list of values</span></div></div>
<div class="abs" style="left:969px;top:650px;width:406px;height:31px;background:linear-gradient(rgba(235,239,244,0),rgba(225,230,237,0.55))"></div>
<div class="abs" style="left:1375px;top:102px;width:6px;height:357px;background:#cfd6df;border-radius:3px"></div></body></html>
